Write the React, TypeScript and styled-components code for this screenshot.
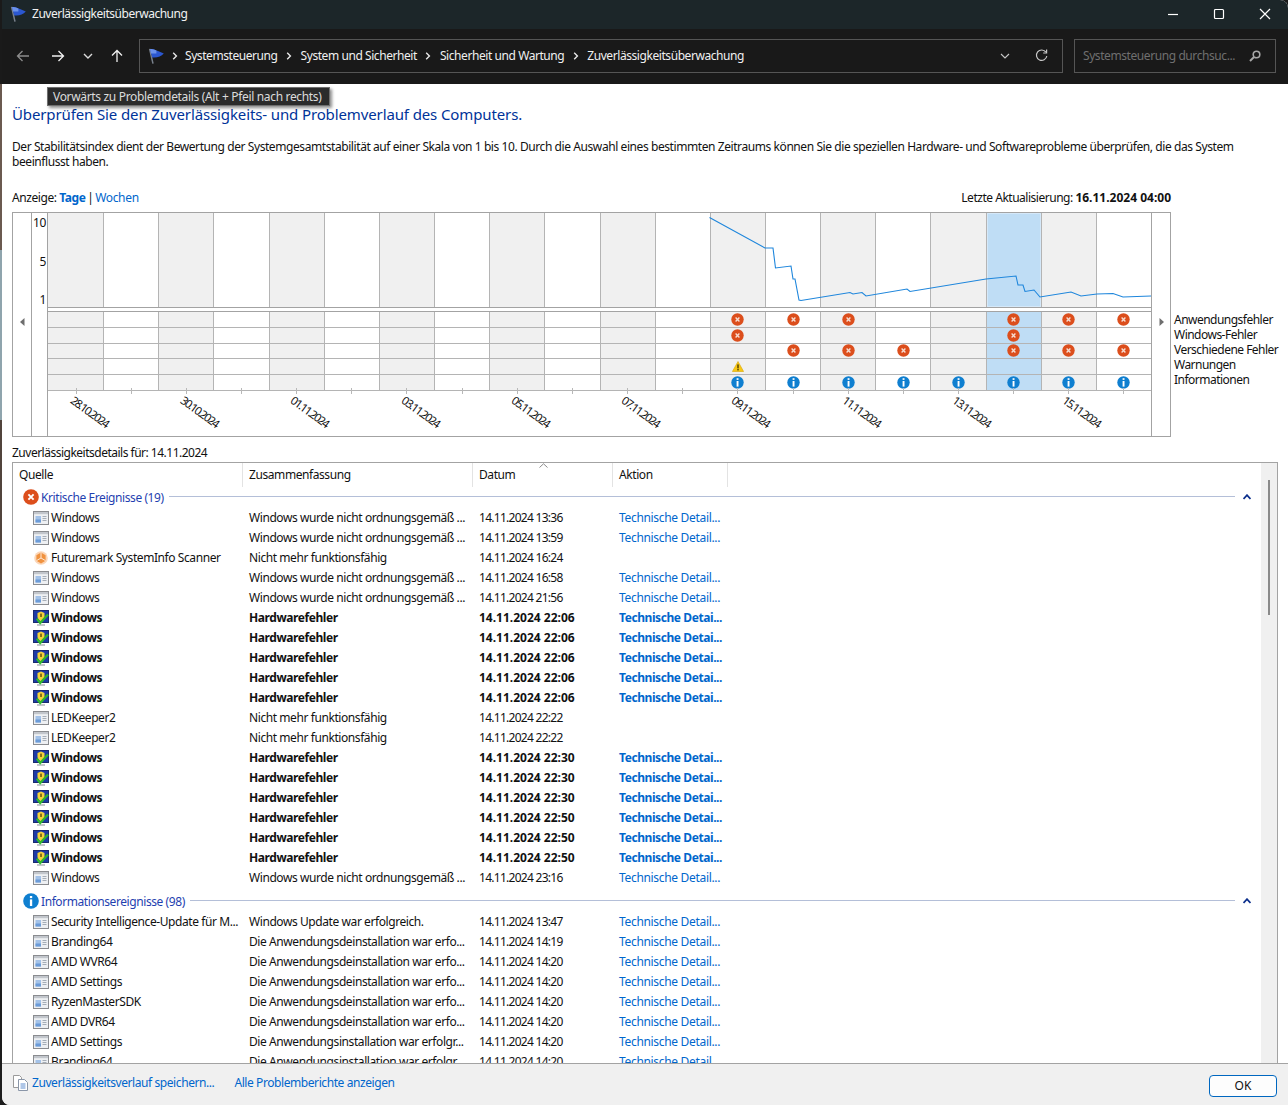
import React from "react";
import styled, { createGlobalStyle } from "styled-components";

const Global = createGlobalStyle`
  html, body { margin: 0; padding: 0; background: #3a4a55; }
  body { font-family: "Noto Sans", "Open Sans", "Liberation Sans", sans-serif; font-size: 12px; color: #111; }
  * { box-sizing: border-box; }
`;

const Page = styled.div`
  position: relative;
  width: 1288px;
  height: 1105px;
  overflow: hidden;
  padding-left: 2px;
  background: linear-gradient(180deg, #1a1a1a 0 84px, #6b5a50 84px 250px, #8fa4ad 250px 420px, #51443c 420px 700px, #1d1d1d 700px);
`;
const Win = styled.div`
  width: 1286px;
  height: 1105px;
  display: flex;
  flex-direction: column;
  background: #fff;
  border-radius: 0 8px 0 8px;
  overflow: hidden;
  letter-spacing: -0.42px;
`;
const TitleBar = styled.div`
  height: 29px;
  flex: none;
  background: #1c2629;
  display: flex;
  align-items: center;
  padding: 0 0 2px 8px;
  color: #f2f2f2;
`;
const TitleText = styled.span`
  margin-left: 6px;
  font-size: 12px;
  letter-spacing: -0.48px;
  flex: 1;
`;
const WinButtons = styled.div`
  display: flex;
  align-items: center;
`;
const WinBtn = styled.div`
  width: 46px;
  height: 27px;
  display: flex;
  align-items: center;
  justify-content: center;
`;
const NavBar = styled.div`
  height: 55px;
  flex: none;
  background: #191919;
  display: flex;
  align-items: center;
  padding: 0 10px 2px 0;
  color: #fff;
`;
const NavButtons = styled.div`
  width: 137px;
  flex: none;
  display: flex;
  align-items: center;
  padding-left: 14px;
`;
const NavBtn = styled.div<{ $w: number }>`
  width: ${(p) => p.$w}px;
  display: flex;
  align-items: center;
  justify-content: flex-start;
`;
const AddressBox = styled.div`
  width: 924px;
  height: 34px;
  flex: none;
  border: 1px solid #555;
  display: flex;
  align-items: center;
  padding-left: 8px;
`;
const Crumb = styled.span`
  color: #f0f0f0;
  font-size: 12px;
  letter-spacing: -0.43px;
  white-space: nowrap;
`;
const CrumbSep = styled.span<{ $w?: number }>`
  width: ${(p) => p.$w ?? 23}px;
  flex: none;
  display: flex;
  justify-content: center;
`;
const AddressEnd = styled.div`
  margin-left: auto;
  display: flex;
  align-items: center;
  gap: 25px;
  padding-right: 14px;
`;
const SearchBox = styled.div`
  width: 202px;
  height: 34px;
  margin-left: 11px;
  flex: none;
  border: 1px solid #555;
  display: flex;
  align-items: center;
  justify-content: space-between;
  padding: 0 14px 0 8px;
  color: #6f6f6f;
  font-size: 12px;
`;
const Tooltip = styled.div`
  position: absolute;
  left: 47px;
  top: 87px;
  height: 19px;
  width: 283px;
  background: #2b2b2b;
  border: 1px solid #6f6f6f;
  box-shadow: 2px 2px 3px rgba(0, 0, 0, 0.45);
  color: #dcdcdc;
  font-size: 12px;
  letter-spacing: -0.33px;
  line-height: 17px;
  padding-left: 5px;
  white-space: nowrap;
  z-index: 5;
`;
const Content = styled.div`
  flex: 1;
  min-height: 0;
  padding: 0 8px 0 10px;
  background: #fff;
  display: flex;
  flex-direction: column;
`;
const Heading = styled.h1`
  margin: 19px 0 0;
  font-weight: 400;
  font-size: 15px;
  line-height: 22px;
  color: #003399;
  letter-spacing: -0.12px;
`;
const Description = styled.p`
  margin: 14px 0 0;
  line-height: 15px;
  font-size: 12px;
  width: 1240px;
`;
const ViewRow = styled.div`
  margin-top: 21px;
  width: 1159px;
  height: 15px;
  line-height: 15px;
  display: flex;
  justify-content: space-between;
`;
const LinkText = styled.span<{ $bold?: boolean }>`
  color: #0066cc;
  font-weight: ${(p) => (p.$bold ? 700 : "inherit")};
  letter-spacing: ${(p) => (p.$bold ? "-0.42px" : "-0.32px")};
`;
const Pipe = styled.span`
  margin: 0 -1px;
`;
const RightLabel = styled.span`
  letter-spacing: -0.48px;
`;
const Strong = styled.b`
  font-weight: 700;
  letter-spacing: 0;
`;
const ChartRow = styled.div`
  margin-top: 7px;
  display: flex;
`;
const ChartBox = styled.div`
  width: 1159px;
  height: 225px;
  flex: none;
  border: 1px solid #a3a3a3;
  display: grid;
  grid-template-columns: 19px 16px 1fr 19px;
`;
const ArrowCol = styled.div<{ $side: "l" | "r" }>`
  ${(p) => (p.$side === "l" ? "border-right" : "border-left")}: 1px solid #a3a3a3;
  height: 223px;
  padding-top: 105px;
  display: flex;
  justify-content: center;
  align-items: flex-start;
`;
const YAxis = styled.div`
  border-right: 1px solid #a3a3a3;
  padding: 2px 1px 0 0;
  display: flex;
  flex-direction: column;
  align-items: flex-end;
  gap: 23.5px;
`;
const YTick = styled.span`
  line-height: 15px;
  font-size: 12px;
`;
const Plot = styled.div`
  position: relative;
  display: flex;
  flex-direction: column;
  min-width: 0;
`;
const Graph = styled.div`
  height: 95px;
  flex: none;
  display: grid;
  grid-template-columns: repeat(20, 1fr);
  border-bottom: 1px solid #a3a3a3;
`;
const shade = (k: string) => (k === "sel" ? "#bfddf5" : k === "odd" ? "#f0f0f0" : "#fff");
const GraphCell = styled.div<{ $kind: string; $first: boolean }>`
  background: ${(p) => shade(p.$kind)};
  border-left: ${(p) => (p.$first ? "none" : "1px solid #b4b4b4")};
  ${(p) => (p.$kind === "sel" ? "box-shadow: inset 1px 1px 0 #d4e8f9, inset -1px -1px 0 #d4e8f9;" : "")}
`;
const Line = styled.svg`
  position: absolute;
  left: 0;
  top: 0;
  width: 1103px;
  height: 95px;
  overflow: visible;
  pointer-events: none;
`;
const Rows = styled.div`
  margin-top: 3px;
  height: 80px;
  flex: none;
  border-top: 1px solid #a3a3a3;
  display: grid;
  grid-template-rows: repeat(5, 1fr);
`;
const ChartRowCells = styled.div`
  display: grid;
  grid-template-columns: repeat(20, 1fr);
  border-bottom: 1px solid #b4b4b4;
  min-height: 0;
`;
const MarkCell = styled.div<{ $kind: string; $first: boolean }>`
  background: ${(p) => shade(p.$kind)};
  border-left: ${(p) => (p.$first ? "none" : "1px solid #b4b4b4")};
  display: flex;
  align-items: center;
  justify-content: center;
  min-height: 0;
`;
const InfoMark = styled.span`
  display: flex;
  margin-top: -1px;
`;
const Dates = styled.div`
  flex: 1;
  display: grid;
  grid-template-columns: repeat(20, 1fr);
`;
const DateCell = styled.div`
  position: relative;
  display: flex;
  align-items: center;
  justify-content: center;
  &::before {
    content: "";
    position: absolute;
    left: 50%;
    top: -3px;
    width: 1px;
    height: 6px;
    background: #b8b8b8;
  }
`;
const DateLabel = styled.span`
  white-space: nowrap;
  font-size: 11.5px;
  letter-spacing: -1.5px;
  transform: translate(14px, -2px) rotate(36deg);
`;
const Legend = styled.div`
  margin: 100px 0 0 3px;
  line-height: 15px;
  letter-spacing: -0.52px;
  white-space: nowrap;
`;
const LegendItem = styled.div`
  height: 15px;
`;
const DetailsLabel = styled.div`
  margin-top: 8px;
  line-height: 15px;
  height: 15px;
  letter-spacing: -0.5px;
`;
const ListBox = styled.div`
  margin-top: 2px;
  width: 1266px;
  flex: 1;
  min-height: 0;
  border: 1px solid #a3a3a3;
  border-bottom: none;
  display: flex;
  overflow: hidden;
`;
const ListMain = styled.div`
  flex: 1;
  min-width: 0;
  overflow: hidden;
`;
const HeaderRow = styled.div`
  position: relative;
  height: 23px;
  display: grid;
  grid-template-columns: 230px 230px 140px 115px;
`;
const HeaderCell = styled.div`
  border-right: 1px solid #e3e3e3;
  padding-left: 6px;
  line-height: 24px;
`;
const SortCaret = styled.svg`
  position: absolute;
  left: 526px;
  top: 0;
`;
const GroupHeader = styled.div<{ $first?: boolean }>`
  height: 22px;
  margin-top: ${(p) => (p.$first ? 0 : 2)}px;
  display: flex;
  align-items: center;
  padding: 0 10px;
  color: #1f3fb0;
`;
const GroupLabel = styled.span`
  margin-left: 2px;
  white-space: nowrap;
`;
const GroupRule = styled.div`
  flex: 1;
  height: 1px;
  margin: -1px 8px 0 5px;
  background: #b4bfd8;
`;
const Row = styled.div<{ $bold?: boolean }>`
  height: 20px;
  display: grid;
  grid-template-columns: 230px 230px 140px 115px;
  line-height: 20px;
  font-weight: ${(p) => (p.$bold ? 700 : 400)};
  white-space: nowrap;
`;
const SourceCell = styled.div`
  padding-left: 20px;
  display: flex;
  align-items: center;
  gap: 2px;
  overflow: hidden;
`;
const Cell = styled.div`
  padding-left: 6px;
  overflow: hidden;
`;
const DateText = styled(Cell)<{ $bold?: boolean }>`
  letter-spacing: ${(p) => (p.$bold ? "0" : "-0.72px")};
`;
const Scrollbar = styled.div`
  width: 16px;
  flex: none;
  background: #f0f0f0;
  padding-top: 17px;
  display: flex;
  justify-content: center;
`;
const Thumb = styled.div`
  width: 2px;
  height: 135px;
  background: #8a8a8a;
`;
const Footer = styled.div`
  height: 42px;
  flex: none;
  background: #f0f0f0;
  border-top: 1px solid #a3a3a3;
  display: flex;
  align-items: center;
  padding: 0 11px 4px 11px;
`;
const FooterLink = styled.span<{ $gap?: number }>`
  color: #0066cc;
  white-space: nowrap;
  margin-left: ${(p) => p.$gap ?? 0}px;
`;
const FooterLinks = styled.div`
  display: flex;
  align-items: center;
  flex: 1;
`;
const OkButton = styled.button`
  width: 68px;
  height: 22px;
  margin-top: 6px;
  border: 1.5px solid #0067c0;
  border-radius: 4px;
  background: #fdfdfd;
  font: inherit;
  color: #111;
  padding: 0;
`;

/* --- drawings --- */
const Flag = () => (
  <svg width="16" height="16" viewBox="0 0 16 16" style={{ flex: "none" }}>
    <path d="M1.6 0.8 L5 15.6" stroke="#78808c" strokeWidth="1.5" fill="none" />
    <path d="M2 1.2 C5 0.2 7.5 2.4 10 3 L15.8 5.4 C13 8.6 9 10 4.2 9.4 Z" fill="#2b57d0" />
    <path d="M2 1.2 C4.5 0.6 6.5 2 8.4 2.6 L8.4 5.4 L3 5.4 Z" fill="#6b91ea" />
  </svg>
);
const Chev = () => (
  <svg width="6" height="8" viewBox="0 0 6 8">
    <path d="M1.2 0.8 L4.4 4 L1.2 7.2" stroke="#e8e8e8" strokeWidth="1.4" fill="none" />
  </svg>
);
const AppIcon = () => (
  <svg width="16" height="14" viewBox="0 0 16 14" style={{ flex: "none" }}>
    <rect x="0.5" y="0.5" width="15" height="13" fill="#eef0f3" stroke="#8a8c90" />
    <rect x="1" y="1" width="14" height="2.2" fill="#c2c6cc" />
    <rect x="2.5" y="5" width="5.5" height="6.5" fill="#a3c2e8" />
    <rect x="2.5" y="8.5" width="5.5" height="3" fill="#6b9bd8" />
    <path d="M9.5 5.5h4M9.5 7.5h4M9.5 9.5h4" stroke="#a6aeb8" />
  </svg>
);
const ShieldIcon = () => (
  <svg width="16" height="16" viewBox="0 0 16 16" style={{ flex: "none" }}>
    <rect x="0.5" y="0.5" width="15" height="12" fill="#1c3aa6" stroke="#1a2a70" />
    <path d="M4 14.5h8v1H4z" fill="#8a8f96" />
    <path d="M8 1.5 L11.5 3 V6.5 C11.5 9 9.6 10.4 8 11.4 C6.4 10.4 4.5 9 4.5 6.5 V3 Z" fill="#f3d23a" />
    <rect x="7.2" y="3.6" width="1.6" height="3.4" fill="#6b5a10" />
    <path d="M3.8 8.6 L7.2 13 L15 4.4" stroke="#2eb52e" strokeWidth="2.2" fill="none" />
  </svg>
);
const FmIcon = () => (
  <svg width="16" height="16" viewBox="0 0 16 16" style={{ flex: "none" }}>
    <circle cx="8" cy="8" r="6.8" fill="#fbd6b8" />
    <path d="M8 2.6 L12.6 5.3 V10.7 L8 13.4 L3.4 10.7 V5.3 Z" fill="#f0923f" />
    <path d="M8 2.6 V8 L12.6 10.7 M8 8 L3.4 10.7" stroke="#fde9d8" fill="none" />
  </svg>
);
const ErrSmall = () => (
  <svg width="13" height="13" viewBox="0 0 13 13">
    <circle cx="6.5" cy="6.5" r="6.2" fill="#dc4e1c" />
    <path d="M4.6 4.6l3.8 3.8M8.4 4.6l-3.8 3.8" stroke="#f7dcd0" strokeWidth="1.4" />
  </svg>
);
const InfoSmall = () => (
  <svg width="13" height="13" viewBox="0 0 13 13">
    <circle cx="6.5" cy="6.5" r="6.2" fill="#0f7fd0" />
    <rect x="5.6" y="2.2" width="1.9" height="1.7" fill="#fff" />
    <rect x="5.6" y="5" width="1.9" height="5.6" fill="#fff" />
  </svg>
);
const WarnSmall = () => (
  <svg width="12" height="11" viewBox="0 0 12 11">
    <path d="M6 0.5 L11.6 10.5 H0.4 Z" fill="#f8c815" stroke="#d9a400" strokeWidth="0.6" />
    <rect x="5.3" y="3.4" width="1.4" height="4" fill="#4a3a00" />
    <rect x="5.3" y="8" width="1.4" height="1.4" fill="#4a3a00" />
  </svg>
);
const ErrBig = () => (
  <svg width="16" height="16" viewBox="0 0 16 16" style={{ flex: "none" }}>
    <circle cx="8" cy="8" r="7.8" fill="#dc4e1c" />
    <path d="M5.4 5.4l5.2 5.2M10.6 5.4l-5.2 5.2" stroke="#fff" strokeWidth="1.9" />
  </svg>
);
const InfoBig = () => (
  <svg width="16" height="16" viewBox="0 0 16 16" style={{ flex: "none" }}>
    <circle cx="8" cy="8" r="7.8" fill="#0f7fd0" />
    <rect x="6.9" y="3" width="2.3" height="2.1" fill="#fff" />
    <rect x="6.9" y="6.4" width="2.3" height="6.6" fill="#fff" />
  </svg>
);
const Collapse = () => (
  <svg width="8" height="6" viewBox="0 0 8 6" style={{ flex: "none" }}>
    <path d="M0.5 5 L4 1.2 L7.5 5" stroke="#0b2f8c" strokeWidth="1.8" fill="none" />
  </svg>
);
const SaveIcon = () => (
  <svg width="15" height="16" viewBox="0 0 15 16" style={{ flex: "none", marginRight: 4 }}>
    <path d="M0.5 0.5h6l2 2v10h-8z" fill="#fff" stroke="#9a9a9a" />
    <path d="M5.5 4.5h6l3 3v8h-9z" fill="#fff" stroke="#8a96a8" />
    <path d="M7.5 9h5M7.5 11h5M7.5 13h5" stroke="#5f8ed0" />
  </svg>
);

/* --- data --- */
type Kind = "app" | "shield" | "fm";
type Item = { k: Kind; src: string; sum: string; date: string; action?: boolean };

const WIN = "Windows wurde nicht ordnungsgemäß ...";
const hw = (date: string): Item => ({ k: "shield", src: "Windows", sum: "Hardwarefehler", date, action: true });
const win = (date: string): Item => ({ k: "app", src: "Windows", sum: WIN, date, action: true });
const led = (date: string): Item => ({ k: "app", src: "LEDKeeper2", sum: "Nicht mehr funktionsfähig", date });

const critical: Item[] = [
  win("14.11.2024 13:36"),
  win("14.11.2024 13:59"),
  { k: "fm", src: "Futuremark SystemInfo Scanner", sum: "Nicht mehr funktionsfähig", date: "14.11.2024 16:24" },
  win("14.11.2024 16:58"),
  win("14.11.2024 21:56"),
  hw("14.11.2024 22:06"),
  hw("14.11.2024 22:06"),
  hw("14.11.2024 22:06"),
  hw("14.11.2024 22:06"),
  hw("14.11.2024 22:06"),
  led("14.11.2024 22:22"),
  led("14.11.2024 22:22"),
  hw("14.11.2024 22:30"),
  hw("14.11.2024 22:30"),
  hw("14.11.2024 22:30"),
  hw("14.11.2024 22:50"),
  hw("14.11.2024 22:50"),
  hw("14.11.2024 22:50"),
  win("14.11.2024 23:16"),
];
const UNINST = "Die Anwendungsdeinstallation war erfo...";
const INST = "Die Anwendungsinstallation war erfolgr...";
const info: Item[] = [
  { k: "app", src: "Security Intelligence-Update für M...", sum: "Windows Update war erfolgreich.", date: "14.11.2024 13:47", action: true },
  { k: "app", src: "Branding64", sum: UNINST, date: "14.11.2024 14:19", action: true },
  { k: "app", src: "AMD WVR64", sum: UNINST, date: "14.11.2024 14:20", action: true },
  { k: "app", src: "AMD Settings", sum: UNINST, date: "14.11.2024 14:20", action: true },
  { k: "app", src: "RyzenMasterSDK", sum: UNINST, date: "14.11.2024 14:20", action: true },
  { k: "app", src: "AMD DVR64", sum: UNINST, date: "14.11.2024 14:20", action: true },
  { k: "app", src: "AMD Settings", sum: INST, date: "14.11.2024 14:20", action: true },
  { k: "app", src: "Branding64", sum: INST, date: "14.11.2024 14:20", action: true },
];

const cols = Array.from({ length: 20 }, (_, i) => i);
const kindOf = (i: number) => (i === 17 ? "sel" : i % 2 === 0 ? "odd" : "even");
const marks: Record<number, number[]> = {
  0: [12, 13, 14, 17, 18, 19],
  1: [12, 17],
  2: [13, 14, 15, 17, 18, 19],
  3: [12],
  4: [12, 13, 14, 15, 16, 17, 18, 19],
};
const dateLabels: Record<number, string> = {
  0: "28.10.2024", 2: "30.10.2024", 4: "01.11.2024", 6: "03.11.2024", 8: "05.11.2024",
  10: "07.11.2024", 12: "09.11.2024", 14: "11.11.2024", 16: "13.11.2024", 18: "15.11.2024",
};
const points =
  "709.5,217.5 765,248 773,248 775.5,268 791,266 793,279 795,279 799,300 801,300.5 850,292.5 853,294 862,292.5 866,296 907,289 910,291.5 986,279 1016,276 1018,285 1023,285 1025,291.5 1034,290 1040,297 1071,292 1081,296 1097,294 1113,293.5 1123,297 1151,296";

const iconFor = (k: Kind) => (k === "app" ? <AppIcon /> : k === "shield" ? <ShieldIcon /> : <FmIcon />);

const ItemRow = ({ it }: { it: Item }) => {
  const bold = it.k === "shield";
  return (
    <Row $bold={bold}>
      <SourceCell>
        {iconFor(it.k)}
        <span>{it.src}</span>
      </SourceCell>
      <Cell>{it.sum}</Cell>
      <DateText $bold={bold}>{it.date}</DateText>
      <Cell>{it.action && <LinkText $bold={bold}>{bold ? "Technische Detai..." : "Technische Detail..."}</LinkText>}</Cell>
    </Row>
  );
};

const stroke = { stroke: "#fff", strokeWidth: 1.2, fill: "none" } as const;

export default function App() {
  return (
    <Page>
      <Global />
      <Win>
        <TitleBar>
          <Flag />
          <TitleText>Zuverlässigkeitsüberwachung</TitleText>
          <WinButtons>
            <WinBtn>
              <svg width="12" height="12" viewBox="0 0 12 12"><path d="M1 6.5h10" {...stroke} /></svg>
            </WinBtn>
            <WinBtn>
              <svg width="12" height="12" viewBox="0 0 12 12"><rect x="1.5" y="1.5" width="9" height="9" rx="1" {...stroke} /></svg>
            </WinBtn>
            <WinBtn>
              <svg width="12" height="12" viewBox="0 0 12 12"><path d="M1 1l10 10M11 1L1 11" {...stroke} /></svg>
            </WinBtn>
          </WinButtons>
        </TitleBar>
        <NavBar>
          <NavButtons>
            <NavBtn $w={35}>
              <svg width="14" height="12" viewBox="0 0 14 12"><path d="M13 6H1.5M6.5 1L1.5 6l5 5" stroke="#8c8c8c" strokeWidth="1.3" fill="none" /></svg>
            </NavBtn>
            <NavBtn $w={32}>
              <svg width="14" height="12" viewBox="0 0 14 12"><path d="M1 6h11.5M7.5 1l5 5-5 5" stroke="#f0f0f0" strokeWidth="1.3" fill="none" /></svg>
            </NavBtn>
            <NavBtn $w={28}>
              <svg width="10" height="6" viewBox="0 0 10 6"><path d="M1 1l4 4 4-4" stroke="#dcdcdc" strokeWidth="1.4" fill="none" /></svg>
            </NavBtn>
            <NavBtn $w={20}>
              <svg width="12" height="14" viewBox="0 0 12 14"><path d="M6 13V1.5M1 6.5l5-5 5 5" stroke="#f0f0f0" strokeWidth="1.3" fill="none" /></svg>
            </NavBtn>
          </NavButtons>
          <AddressBox>
            <Flag />
            <CrumbSep $w={21}><Chev /></CrumbSep>
            <Crumb>Systemsteuerung</Crumb>
            <CrumbSep><Chev /></CrumbSep>
            <Crumb>System und Sicherheit</Crumb>
            <CrumbSep><Chev /></CrumbSep>
            <Crumb>Sicherheit und Wartung</Crumb>
            <CrumbSep><Chev /></CrumbSep>
            <Crumb>Zuverlässigkeitsüberwachung</Crumb>
            <AddressEnd>
              <svg width="10" height="6" viewBox="0 0 10 6"><path d="M1 1l4 4 4-4" stroke="#c8c8c8" strokeWidth="1.1" fill="none" /></svg>
              <svg width="13" height="13" viewBox="0 0 13 13">
                <path d="M10.9 3.2A5.2 5.2 0 1 0 11.8 7" stroke="#c8c8c8" strokeWidth="1.2" fill="none" />
                <path d="M11.6 0.6V4H8.2" stroke="#c8c8c8" strokeWidth="1.2" fill="none" />
              </svg>
            </AddressEnd>
          </AddressBox>
          <SearchBox>
            <span>Systemsteuerung durchsuc...</span>
            <svg width="12" height="12" viewBox="0 0 12 12">
              <circle cx="7.5" cy="4.5" r="3.3" stroke="#a8a8a8" strokeWidth="1.6" fill="none" />
              <path d="M5 7L1 11" stroke="#a8a8a8" strokeWidth="2" />
            </svg>
          </SearchBox>
        </NavBar>
        <Content>
          <Heading>Überprüfen Sie den Zuverlässigkeits- und Problemverlauf des Computers.</Heading>
          <Description>
            Der Stabilitätsindex dient der Bewertung der Systemgesamtstabilität auf einer Skala von 1 bis 10. Durch die Auswahl eines bestimmten Zeitraums können Sie die speziellen Hardware- und Softwareprobleme überprüfen, die das System beeinflusst haben.
          </Description>
          <ViewRow>
            <span>
              Anzeige: <LinkText $bold>Tage</LinkText> <Pipe>|</Pipe> <LinkText>Wochen</LinkText>
            </span>
            <RightLabel>
              Letzte Aktualisierung: <Strong>16.11.2024 04:00</Strong>
            </RightLabel>
          </ViewRow>
          <ChartRow>
            <ChartBox>
              <ArrowCol $side="l">
                <svg width="5" height="8" viewBox="0 0 5 8"><path d="M4.5 0v8L0 4z" fill="#6e6e6e" /></svg>
              </ArrowCol>
              <YAxis>
                <YTick>10</YTick>
                <YTick>5</YTick>
                <YTick>1</YTick>
              </YAxis>
              <Plot>
                <Graph>
                  {cols.map((i) => (
                    <GraphCell key={i} $kind={kindOf(i)} $first={i === 0} />
                  ))}
                </Graph>
                <Line viewBox="48 213 1103 95">
                  <polyline points={points} fill="none" stroke="#1e86dc" strokeWidth="1.1" />
                </Line>
                <Rows>
                  {[0, 1, 2, 3, 4].map((r) => (
                    <ChartRowCells key={r}>
                      {cols.map((i) => (
                        <MarkCell key={i} $kind={kindOf(i)} $first={i === 0}>
                          {marks[r].includes(i) &&
                            (r === 4 ? (
                              <InfoMark>
                                <InfoSmall />
                              </InfoMark>
                            ) : r === 3 ? (
                              <WarnSmall />
                            ) : (
                              <ErrSmall />
                            ))}
                        </MarkCell>
                      ))}
                    </ChartRowCells>
                  ))}
                </Rows>
                <Dates>
                  {cols.map((i) => (
                    <DateCell key={i}>{dateLabels[i] && <DateLabel>{dateLabels[i]}</DateLabel>}</DateCell>
                  ))}
                </Dates>
              </Plot>
              <ArrowCol $side="r">
                <svg width="5" height="8" viewBox="0 0 5 8"><path d="M0.5 0v8L5 4z" fill="#6e6e6e" /></svg>
              </ArrowCol>
            </ChartBox>
            <Legend>
              <LegendItem>Anwendungsfehler</LegendItem>
              <LegendItem>Windows-Fehler</LegendItem>
              <LegendItem>Verschiedene Fehler</LegendItem>
              <LegendItem>Warnungen</LegendItem>
              <LegendItem>Informationen</LegendItem>
            </Legend>
          </ChartRow>
          <DetailsLabel>Zuverlässigkeitsdetails für: 14.11.2024</DetailsLabel>
          <ListBox>
            <ListMain>
              <HeaderRow>
                <HeaderCell>Quelle</HeaderCell>
                <HeaderCell>Zusammenfassung</HeaderCell>
                <HeaderCell>Datum</HeaderCell>
                <HeaderCell>Aktion</HeaderCell>
                <SortCaret width="9" height="5" viewBox="0 0 9 5">
                  <path d="M0.5 4.5L4.5 0.8l4 3.7" stroke="#8a8a8a" fill="none" />
                </SortCaret>
              </HeaderRow>
              <GroupHeader $first>
                <ErrBig />
                <GroupLabel>Kritische Ereignisse (19)</GroupLabel>
                <GroupRule />
                <Collapse />
              </GroupHeader>
              {critical.map((it, i) => (
                <ItemRow key={i} it={it} />
              ))}
              <GroupHeader>
                <InfoBig />
                <GroupLabel>Informationsereignisse (98)</GroupLabel>
                <GroupRule />
                <Collapse />
              </GroupHeader>
              {info.map((it, i) => (
                <ItemRow key={i} it={it} />
              ))}
            </ListMain>
            <Scrollbar>
              <Thumb />
            </Scrollbar>
          </ListBox>
        </Content>
        <Footer>
          <FooterLinks>
            <SaveIcon />
            <FooterLink>Zuverlässigkeitsverlauf speichern...</FooterLink>
            <FooterLink $gap={20}>Alle Problemberichte anzeigen</FooterLink>
          </FooterLinks>
          <OkButton>OK</OkButton>
        </Footer>
      </Win>
      <Tooltip>Vorwärts zu Problemdetails (Alt + Pfeil nach rechts)</Tooltip>
    </Page>
  );
}
